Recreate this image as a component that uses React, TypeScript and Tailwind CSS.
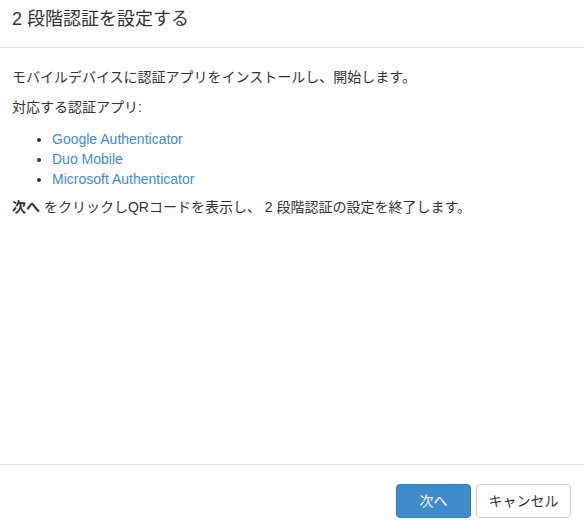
export default function App() {
  const apps = ["Google Authenticator", "Duo Mobile", "Microsoft Authenticator"];
  return (
    <div
      className="flex h-[529px] w-[584px] flex-col bg-white text-[14px] leading-[20px] text-[#333]"
      style={{ fontFamily: '"Liberation Sans", "Noto Sans CJK JP", sans-serif' }}
    >
      <div className="border-b border-[#e5e5e5] px-[12px] pt-[6px] pb-[15px]">
        <h4 className="text-[18px] leading-[26px] font-normal">2 段階認証を設定する</h4>
      </div>
      <div className="flex-1 px-[12px] pt-[19px]">
        <p className="mb-[10px]">モバイルデバイスに認証アプリをインストールし、開始します。</p>
        <p className="mb-[12px]">対応する認証アプリ:</p>
        <ul className="mb-[8px] list-disc pl-[40px]">
          {apps.map((a) => (
            <li key={a}>
              <a href="#" className="text-[#428bca]">
                {a}
              </a>
            </li>
          ))}
        </ul>
        <p>
          <strong className="font-bold">次へ</strong> をクリックしQRコードを表示し、 2 段階認証の設定を終了します。
        </p>
      </div>
      <div className="flex justify-end gap-[5px] border-t border-[#e5e5e5] pr-[13px] pt-[19px] pb-[11px]">
        <button className="h-[34px] w-[75px] rounded-[4px] border border-[#357ebd] bg-[#428bca] text-white">
          次へ
        </button>
        <button className="h-[34px] w-[95px] rounded-[4px] border border-[#ccc] bg-white text-[#333]">
          キャンセル
        </button>
      </div>
    </div>
  );
}
